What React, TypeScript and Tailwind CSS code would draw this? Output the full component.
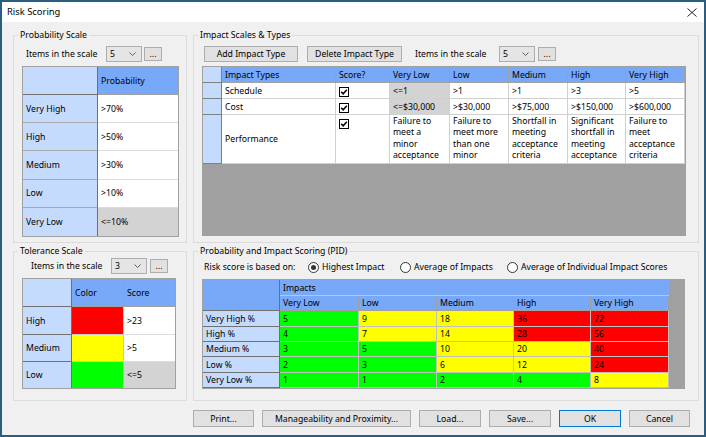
import React from "react";

function Chevron() {
  return (
    <svg width="7" height="4" viewBox="0 0 7 4" className="block">
      <polyline points="0.5,0.5 3.5,3.5 6.5,0.5" fill="none" stroke="#606060" strokeWidth="1" />
    </svg>
  );
}

function Combo({ value }: { value: string }) {
  return (
    <div className="w-[36px] h-[16px] bg-[#e5e5e5] border border-[#adadad] flex items-center justify-between pl-[3px] pr-[5px]">
      <span>{value}</span>
      <Chevron />
    </div>
  );
}

function Dots() {
  return (
    <div className="w-[18px] h-[14px] bg-[#e1e1e1] border border-[#adadad] flex items-end justify-center pb-[1px] leading-[10px]">
      ...
    </div>
  );
}

function Check() {
  return (
    <svg width="10" height="10" viewBox="0 0 10 10" className="block">
      <rect x="0.5" y="0.5" width="9" height="9" fill="#fff" stroke="#000" strokeWidth="1" />
      <polyline points="2.2,4.8 4.2,6.8 7.8,2.8" fill="none" stroke="#000" strokeWidth="1.6" />
    </svg>
  );
}

function Radio({ checked }: { checked?: boolean }) {
  return (
    <span className="w-[11px] h-[11px] rounded-full border border-[#333] bg-white flex items-center justify-center shrink-0">
      {checked ? <span className="w-[5px] h-[5px] rounded-full bg-[#333]" /> : null}
    </span>
  );
}

const pidRows: { label: string; cells: [string, string][] }[] = [
  { label: "Very High %", cells: [["5", "g"], ["9", "y"], ["18", "y"], ["36", "r"], ["72", "r"]] },
  { label: "High %", cells: [["4", "g"], ["7", "y"], ["14", "y"], ["28", "r"], ["56", "r"]] },
  { label: "Medium %", cells: [["3", "g"], ["5", "g"], ["10", "y"], ["20", "y"], ["40", "r"]] },
  { label: "Low %", cells: [["2", "g"], ["3", "g"], ["6", "y"], ["12", "y"], ["24", "r"]] },
  { label: "Very Low %", cells: [["1", "g"], ["1", "g"], ["2", "g"], ["4", "g"], ["8", "y"]] },
];

const colorCls: Record<string, string> = {
  g: "bg-[#00ff00]",
  y: "bg-[#ffff00]",
  r: "bg-[#ff0000]",
};

const perf: string[][] = [
  ["Failure to", "meet a", "minor", "acceptance"],
  ["Failure to", "meet more", "than one", "minor"],
  ["Shortfall in", "meeting", "acceptance", "criteria"],
  ["Significant", "shortfall in", "meeting", "acceptance"],
  ["Failure to", "meet", "acceptance", "criteria"],
];

export default function App() {
  const lb = "bg-[#c5dbfe]";
  return (
    <div className="w-[706px] h-[437px] bg-[#f0f0f0] border-2 border-[#2b5d80] flex flex-col overflow-hidden text-black text-[8.7px] font-['Noto_Sans',sans-serif] leading-[12px]">
      {/* Title bar */}
      <div className="h-[20px] bg-white flex items-center justify-between pl-[5px] pr-[7px] shrink-0">
        <span className="text-[9.4px]">Risk Scoring</span>
        <svg width="10" height="9" viewBox="0 0 10 9" className="block">
          <line x1="0.5" y1="0.5" x2="9.5" y2="8.5" stroke="#222" strokeWidth="1" />
          <line x1="9.5" y1="0.5" x2="0.5" y2="8.5" stroke="#222" strokeWidth="1" />
        </svg>
      </div>

      {/* Body */}
      <div className="flex-1 flex flex-col pl-[11px] pr-[7px] pt-[6px]">
        <div className="grid grid-cols-[174px_506px] grid-rows-[215px_157px] gap-x-[6px] gap-y-[1px]">
          {/* Probability Scale */}
          <fieldset className="border border-[#dcdcdc] min-w-0 h-[215px]">
            <legend className="ml-[4px] px-[2px] leading-[14px]">Probability Scale</legend>
            <div className="flex items-center pt-[4px] pl-[12px]">
              <span className="w-[80px]">Items in the scale</span>
              <Combo value="5" />
              <div className="ml-[2px]">
                <Dots />
              </div>
            </div>
            <div className="ml-[8px] mt-[4px] w-[157px] h-[171px] border border-[#a0a0a0] grid grid-cols-[75px_80px] grid-rows-6">
              <div className={`${lb} border-r border-b border-[#707070]`} />
              <div className="bg-[#78a8f8] border-b border-[#a0a0a0] flex items-center pl-[3px]">Probability</div>
              {[
                [">70%", "w"],
                [">50%", "w"],
                [">30%", "w"],
                [">10%", "w"],
                ["<=10%", "g"],
              ].map(([v, t], i) => {
                const names = ["Very High", "High", "Medium", "Low", "Very Low"];
                return (
                  <React.Fragment key={i}>
                    <div className={`${lb} border-r border-[#707070] ${i < 4 ? "border-b-[1px] border-b-[#a8a8a8]" : ""} flex items-center pl-[3px]`}>
                      {names[i]}
                    </div>
                    <div
                      className={
                        t === "w"
                          ? "bg-white border-b border-[#dcdcdc] flex items-center pl-[3px]"
                          : "bg-[#d3d3d3] flex items-center pl-[3px]"
                      }
                    >
                      {v}
                    </div>
                  </React.Fragment>
                );
              })}
            </div>
          </fieldset>

          {/* Impact Scales & Types */}
          <fieldset className="border border-[#dcdcdc] min-w-0 h-[215px]">
            <legend className="ml-[4px] px-[2px] leading-[14px]">Impact Scales &amp; Types</legend>
            <div className="flex items-center pt-[4px] pl-[10px] h-[20px]">
              <div className="w-[94px] h-[16px] bg-[#e1e1e1] border border-[#adadad] flex items-center justify-center">
                Add Impact Type
              </div>
              <div className="ml-[9px] w-[95px] h-[16px] bg-[#e1e1e1] border border-[#adadad] flex items-center justify-center">
                Delete Impact Type
              </div>
              <span className="ml-[13px] w-[84px]">Items in the scale</span>
              <Combo value="5" />
              <div className="ml-[3px]">
                <Dots />
              </div>
            </div>
            <div className="ml-[8px] mt-[4px] w-[484px] h-[170px] border border-[#a0a0a0] bg-[#a0a0a0] flex flex-col">
              <div className="grid grid-cols-[19px_114px_54px_60px_59px_59px_58px_59px] grid-rows-[16px_16px_16px_49px] bg-white">
                <div className={`${lb} border-r border-b border-[#808080]`} />
                {["Impact Types", "Score?", "Very Low", "Low", "Medium", "High", "Very High"].map((h) => (
                  <div key={h} className="bg-[#78a8f8] border-r border-b border-[#a0a0a0] flex items-center pl-[3px]">
                    {h}
                  </div>
                ))}
                {/* Schedule */}
                <div className={`${lb} border-r border-b border-[#808080]`} />
                <div className="border-r border-b border-[#d0d0d0] flex items-center pl-[3px]">Schedule</div>
                <div className="border-r border-b border-[#d0d0d0] pl-[3px] pt-[4px]">
                  <Check />
                </div>
                <div className="bg-[#d3d3d3] border-r border-b border-[#d0d0d0] flex items-center pl-[3px]">&lt;=1</div>
                {[">1", ">1", ">3", ">5"].map((v, i) => (
                  <div key={i} className="border-r border-b border-[#d0d0d0] flex items-center pl-[3px]">
                    {v}
                  </div>
                ))}
                {/* Cost */}
                <div className={`${lb} border-r border-b border-[#808080]`} />
                <div className="border-r border-b border-[#d0d0d0] flex items-center pl-[3px]">Cost</div>
                <div className="border-r border-b border-[#d0d0d0] pl-[3px] pt-[4px]">
                  <Check />
                </div>
                <div className="bg-[#d3d3d3] border-r border-b border-[#d0d0d0] flex items-center pl-[3px] whitespace-nowrap overflow-hidden">
                  &lt;=$30,000
                </div>
                {[">$30,000", ">$75,000", ">$150,000", ">$600,000"].map((v, i) => (
                  <div key={i} className="border-r border-b border-[#d0d0d0] flex items-center pl-[3px] whitespace-nowrap overflow-hidden">
                    {v}
                  </div>
                ))}
                {/* Performance */}
                <div className={`${lb} border-r border-b border-[#808080]`} />
                <div className="border-r border-b border-[#d0d0d0] flex items-center pl-[3px]">Performance</div>
                <div className="border-r border-b border-[#d0d0d0] pl-[3px] pt-[4px]">
                  <Check />
                </div>
                {perf.map((lines, i) => (
                  <div key={i} className="border-r border-b border-[#d0d0d0] pl-[3px] pt-[1px] overflow-hidden leading-[11.4px]">
                    {lines.map((l, j) => (
                      <div key={j} className="whitespace-nowrap">
                        {l}
                      </div>
                    ))}
                  </div>
                ))}
              </div>
              <div className="flex-1 bg-[#a0a0a0]" />
            </div>
          </fieldset>

          {/* Tolerance Scale */}
          <fieldset className="border border-[#dcdcdc] min-w-0 h-[157px]">
            <legend className="ml-[4px] px-[2px] leading-[14px]">Tolerance Scale</legend>
            <div className="flex items-center pl-[17px] h-[16px]">
              <span className="w-[80px]">Items in the scale</span>
              <Combo value="3" />
              <div className="ml-[3px]">
                <Dots />
              </div>
            </div>
            <div className="ml-[8px] mt-[4px] w-[154px] h-[111px] border border-[#a0a0a0] grid grid-cols-[49px_52px_51px] grid-rows-[28px_28px_27px_26px]">
              <div className={`${lb} border-r border-b border-[#707070]`} />
              <div className="bg-[#78a8f8] border-r border-b border-[#a0a0a0] flex items-center pl-[3px]">Color</div>
              <div className="bg-[#78a8f8] border-b border-[#a0a0a0] flex items-center pl-[3px]">Score</div>

              <div className={`${lb} border-r border-b border-[#707070] flex items-center pl-[3px]`}>High</div>
              <div className="bg-[#ff0000] border-r border-b border-[#c8c8c8]" />
              <div className="bg-white border-b border-[#dcdcdc] flex items-center pl-[3px]">&gt;23</div>

              <div className={`${lb} border-r border-b border-[#707070] flex items-center pl-[3px]`}>Medium</div>
              <div className="bg-[#ffff00] border-r border-b border-[#c8c8c8]" />
              <div className="bg-white border-b border-[#dcdcdc] flex items-center pl-[3px]">&gt;5</div>

              <div className={`${lb} border-r border-[#707070] flex items-center pl-[3px]`}>Low</div>
              <div className="bg-[#00ff00] border-r border-[#c8c8c8]" />
              <div className="bg-[#d3d3d3] flex items-center pl-[3px]">&lt;=5</div>
            </div>
          </fieldset>

          {/* PID */}
          <fieldset className="border border-[#dcdcdc] min-w-0 h-[157px]">
            <legend className="ml-[4px] px-[2px] leading-[14px]">Probability and Impact Scoring (PID)</legend>
            <div className="flex items-center pl-[10px] h-[17px] pt-[1px]">
              <span className="w-[104px]">Risk score is based on:</span>
              <div className="w-[92px] flex items-center gap-[3px]">
                <Radio checked />
                <span>Highest Impact</span>
              </div>
              <div className="w-[107px] flex items-center gap-[3px]">
                <Radio />
                <span>Average of Impacts</span>
              </div>
              <div className="flex items-center gap-[3px]">
                <Radio />
                <span>Average of Individual Impact Scores</span>
              </div>
            </div>
            <div className="ml-[8px] mt-[4px] w-[483px] h-[110px] border border-[#a0a0a0] grid grid-cols-[77px_79px_78px_77px_77px_78px_15px] grid-rows-[16px_15px_16px_15px_15px_16px_15px]">
              <div className="row-span-2 bg-[#78a8f8] border-r border-b border-[#707070]" />
              <div className="col-span-5 bg-[#78a8f8] border-b border-[#b0c8f0] flex items-center pl-[3px]">Impacts</div>
              <div className="row-span-7 bg-[#a0a0a0]" />
              {["Very Low", "Low", "Medium", "High", "Very High"].map((h) => (
                <div key={h} className="bg-[#78a8f8] border-r border-b border-[#a0a0a0] flex items-center pl-[3px]">
                  {h}
                </div>
              ))}
              {pidRows.map((r) => (
                <React.Fragment key={r.label}>
                  <div className={`${lb} border-r border-b border-[#707070] flex items-center pl-[3px]`}>{r.label}</div>
                  {r.cells.map(([v, c], i) => (
                    <div key={i} className={`${colorCls[c]} border-r border-b border-[#c0c0c0] flex items-center pl-[3px]`}>
                      {v}
                    </div>
                  ))}
                </React.Fragment>
              ))}
            </div>
          </fieldset>
        </div>

        {/* Bottom buttons */}
        <div className="flex justify-end gap-[8px] pr-[7px] mt-[9px]">
          <div className="w-[61px] h-[17px] bg-[#e1e1e1] border border-[#adadad] flex items-center justify-center">Print...</div>
          <div className="w-[149px] h-[17px] bg-[#e1e1e1] border border-[#adadad] flex items-center justify-center">
            Manageability and Proximity...
          </div>
          <div className="w-[62px] h-[17px] bg-[#e1e1e1] border border-[#adadad] flex items-center justify-center">Load...</div>
          <div className="w-[62px] h-[17px] bg-[#e1e1e1] border border-[#adadad] flex items-center justify-center">Save...</div>
          <div className="w-[62px] h-[17px] bg-[#e1e1e1] border border-[#0078d7] flex items-center justify-center">OK</div>
          <div className="w-[61px] h-[17px] bg-[#e1e1e1] border border-[#adadad] flex items-center justify-center">Cancel</div>
        </div>
      </div>
    </div>
  );
}
